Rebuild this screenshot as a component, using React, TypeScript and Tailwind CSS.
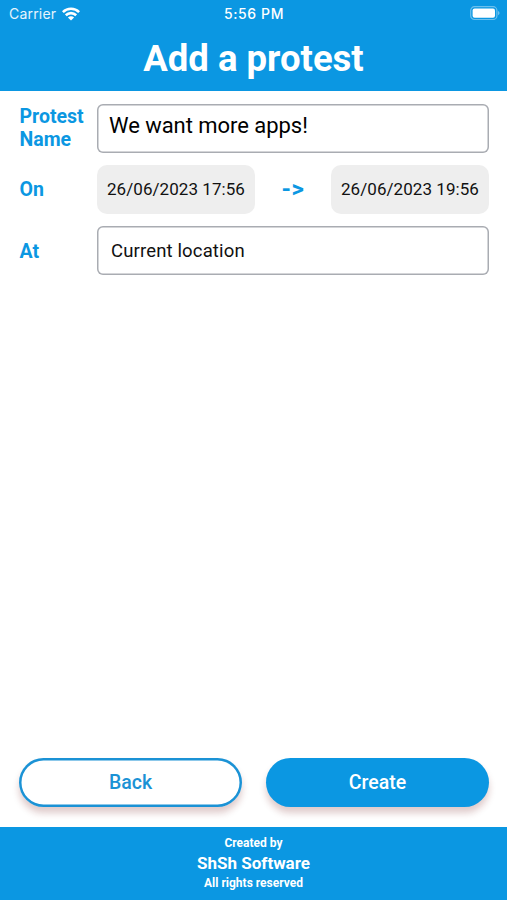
import type { ReactNode } from "react";

function WifiIcon() {
  return (
    <svg width="18" height="14" viewBox="0 0 18 14" fill="none" stroke="white" strokeWidth="2.6">
      <path d="M0.9 5.1C5.3 0.7 12.7 0.7 17.1 5.1" />
      <path d="M3.8 8.3C6.8 5.4 11.2 5.4 14.2 8.3" />
      <path d="M9 13.6L5.9 10.5C7.6 8.9 10.4 8.9 12.1 10.5Z" fill="white" stroke="none" />
    </svg>
  );
}

function BatteryIcon() {
  return (
    <svg width="31" height="15" viewBox="0 0 31 15" fill="none">
      <rect x="0.7" y="0.7" width="26.2" height="12.8" rx="3.8" stroke="white" strokeOpacity="0.4" strokeWidth="1.2" />
      <rect x="2.6" y="2.5" width="22.4" height="9.2" rx="2" fill="white" />
      <path d="M28.2 5C29.9 5.6 29.9 8.6 28.2 9.2Z" fill="white" fillOpacity="0.5" />
    </svg>
  );
}

function StatusBar() {
  return (
    <div className="grid h-[27px] grid-cols-3 items-center pl-[9px] pr-[6px] font-['Inter',sans-serif] text-[14px] text-white">
      <div className="flex items-center gap-[6px]">
        <span className="tracking-[0.2px] text-white/90">Carrier</span>
        <WifiIcon />
      </div>
      <span className="pr-[2px] text-center font-medium tracking-[0.6px]">5:56 PM</span>
      <div className="flex justify-end">
        <BatteryIcon />
      </div>
    </div>
  );
}

function FormRow({ label, labelClass = "", children }: { label: string; labelClass?: string; children: ReactNode }) {
  return (
    <div className="flex h-[49px] items-center">
      <div className={`w-[78px] shrink-0 pl-[0.5px] text-[19.5px] font-bold leading-[23px] text-[#0b97e2] ${labelClass}`}>
        {label}
      </div>
      {children}
    </div>
  );
}

function DateField({ value }: { value: string }) {
  return (
    <button className="h-[49px] w-[158px] rounded-[10px] bg-[#eeeeee] pt-[2px] text-[17px] tracking-[0.06px] text-[#111111]">
      {value}
    </button>
  );
}

export default function App() {
  return (
    <div className="flex h-[900px] w-[507px] flex-col overflow-hidden bg-white font-['Roboto',sans-serif]">
      <header className="h-[91px] bg-[#0b97e2]">
        <StatusBar />
        <h1 className="text-center text-[36.5px] font-bold leading-[64px] text-white">Add a protest</h1>
      </header>

      <main className="flex flex-1 flex-col gap-3 pl-[19px] pr-[18px] pt-[12.5px]">
        <FormRow label="Protest Name">
          <input
            className="h-[49px] min-w-0 flex-1 rounded-[6px] pb-[5px] pl-[12px] text-[22px] tracking-[-0.04px] text-black shadow-[inset_0_0_0_1.5px_#a9acb2] outline-none"
            defaultValue="We want more apps!"
          />
        </FormRow>

        <FormRow label="On">
          <div className="flex flex-1 items-center justify-between">
            <DateField value="26/06/2023 17:56" />
            <span className="text-[24px] font-bold tracking-[0.6px] text-[#0b97e2]">-&gt;</span>
            <DateField value="26/06/2023 19:56" />
          </div>
        </FormRow>

        <FormRow label="At" labelClass="pt-[3px]">
          <button className="h-[49px] flex-1 rounded-[6px] pl-[14px] pt-[3px] text-left text-[18.5px] tracking-[0.15px] text-[#111111] shadow-[inset_0_0_0_1.5px_#a9acb2]">
            Current location
          </button>
        </FormRow>
      </main>

      <div className="grid grid-cols-2 gap-6 pb-5 pl-[19px] pr-[18px]">
        <button className="h-[49px] rounded-full bg-white pt-px text-[19.5px] font-medium text-[#1b92d5] shadow-[inset_0_0_0_2.5px_#1b92d5,0_6px_7px_rgba(110,20,20,0.22)]">
          Back
        </button>
        <button className="h-[49px] rounded-full bg-[#0b97e2] pt-px text-[19.5px] font-medium text-white shadow-[0_6px_7px_rgba(110,20,20,0.22)]">
          Create
        </button>
      </div>

      <footer className="h-[73px] bg-[#0b97e2] pt-[7px] text-center font-bold text-white">
        <p className="text-[12px] leading-[19px]">Created by</p>
        <p className="text-[17px] leading-[21px]">ShSh Software</p>
        <p className="text-[12px] leading-[19px]">All rights reserved</p>
      </footer>
    </div>
  );
}
